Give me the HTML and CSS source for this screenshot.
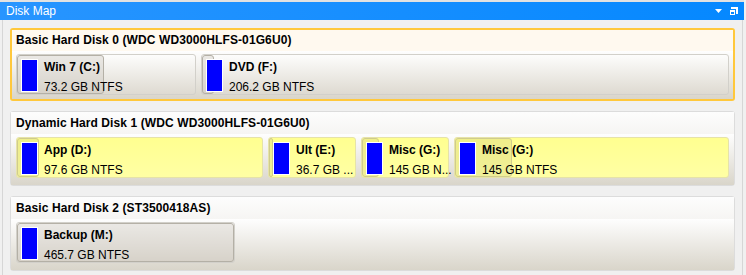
FILE: index.html
```html
<!DOCTYPE html>
<html lang="en">
<head>
    <meta charset="UTF-8">
    <title>Disk Map</title>
    <link rel="stylesheet" href="styles.css">
</head>
<body>

<div class="window">
    <div class="titlebar">
        <span class="title">Disk Map</span>
        <div class="tools">
            <svg width="8" height="5" viewBox="0 0 8 5"><path d="M0 0h7L3.5 4z" fill="#fff"/></svg>
            <svg width="8" height="8" viewBox="0 0 8 8"><path d="M1 0h7v7H6V2H1z M0 3h5v5H0z M1 5v2h3V5z" fill="#fff" fill-rule="evenodd"/></svg>
        </div>
    </div>

    <div class="content">
        <div class="disk selected">
            <div class="disk-head">Basic Hard Disk 0 (WDC WD3000HLFS-01G6U0)</div>
            <div class="parts">
                <div class="part" style="width: 180px;">
                    <div class="used" style="width: 87px;"></div>
                    <div class="icon"></div>
                    <div class="info"><b>Win 7 (C:)</b><span>73.2 GB NTFS</span></div>
                </div>
                <div class="part" style="flex: 1;">
                    <div class="used" style="width: 12px;"></div>
                    <div class="icon"></div>
                    <div class="info"><b>DVD (F:)</b><span>206.2 GB NTFS</span></div>
                </div>
            </div>
        </div>

        <div class="disk">
            <div class="disk-head">Dynamic Hard Disk 1 (WDC WD3000HLFS-01G6U0)</div>
            <div class="parts">
                <div class="part yellow" style="width: 247px;">
                    <div class="used" style="width: 22px;"></div>
                    <div class="icon"></div>
                    <div class="info"><b>App (D:)</b><span>97.6 GB NTFS</span></div>
                </div>
                <div class="part yellow" style="width: 88px;">
                    <div class="used" style="width: 4px;"></div>
                    <div class="icon"></div>
                    <div class="info"><b>Ult (E:)</b><span>36.7 GB ...</span></div>
                </div>
                <div class="part yellow" style="width: 88px;">
                    <div class="used" style="width: 17px;"></div>
                    <div class="icon"></div>
                    <div class="info"><b>Misc (G:)</b><span>145 GB N...</span></div>
                </div>
                <div class="part yellow" style="flex: 1;">
                    <div class="used" style="width: 57px;"></div>
                    <div class="icon"></div>
                    <div class="info"><b>Misc (G:)</b><span>145 GB NTFS</span></div>
                </div>
            </div>
        </div>

        <div class="disk">
            <div class="disk-head">Basic Hard Disk 2 (ST3500418AS)</div>
            <div class="parts">
                <div class="part" style="width: 219px;">
                    <div class="used" style="width: 217px;"></div>
                    <div class="icon"></div>
                    <div class="info"><b>Backup (M:)</b><span>465.7 GB NTFS</span></div>
                </div>
            </div>
        </div>
    </div>
</div>

</body>
</html>
```

FILE: styles.css
```css
body { margin: 0; background-color: #f0f0f0; font-family: "Liberation Sans", Arial, sans-serif; font-size: 12px; color: #000; }
.window { width: 744px; height: 275px; border-top: 2px solid #e2e2e2; box-sizing: border-box; }
.titlebar { height: 18px; background: linear-gradient(to right, #2895ff, #0588ff); color: #fff; display: flex; align-items: center; justify-content: space-between; padding: 0 6px; }
.title { font-size: 12px; }
.tools { display: flex; align-items: center; gap: 7px; }
.content { border-left: 1px solid #d6d6d6; border-right: 1px solid #d6d6d6; margin-left: 2px; margin-right: 1px; padding: 8px 7px 0 7px; height: 255px; box-sizing: border-box; }

.disk { border: 1px solid #dcdcdc; border-radius: 3px; margin-bottom: 10px; background: #fff; }
.disk.selected { border: 2px solid #ffc83c; }
.disk-head { height: 22px; line-height: 22px; padding-left: 5px; font-weight: bold; letter-spacing: 0.1px; background: linear-gradient(#fdfdfd, #f6f5f3); }
.disk.selected .disk-head { background: #fff9ef; padding-left: 4px; height: 21px; line-height: 20px; }
.parts { display: flex; gap: 5px; padding: 3px 5px 7px 5px; background: linear-gradient(#fefefe, #d9d5ca); }
.disk.selected .parts { padding: 3px 4px 4px 4px; }

.part { position: relative; height: 41px; border: 1px solid #d2d0ca; border-radius: 3px; background: linear-gradient(#fdfdfc, #dedad1); display: flex; align-items: flex-start; box-sizing: border-box; }
.part.yellow { background: linear-gradient(#ffff90, #ffffa4); border-color: #e6e3a8; }
.used { position: absolute; left: 0; top: 0; bottom: 0; border: 1px solid #b4b0a6; border-radius: 3px; background: rgba(200, 196, 186, 0.35); box-sizing: border-box; }
.part.yellow .used { border-color: #d0cc8c; background: rgba(190, 186, 120, 0.25); }
.icon { position: relative; width: 15px; height: 31px; margin: 5px 0 0 5px; background: #0000ff; box-shadow: 0 0 0 1px #fff; flex: none; }
.info { position: relative; display: flex; flex-direction: column; margin: 4px 0 0 7px; white-space: nowrap; }
.info b { line-height: 16px; }
.info span { line-height: 16px; margin-top: 4px; }
```
